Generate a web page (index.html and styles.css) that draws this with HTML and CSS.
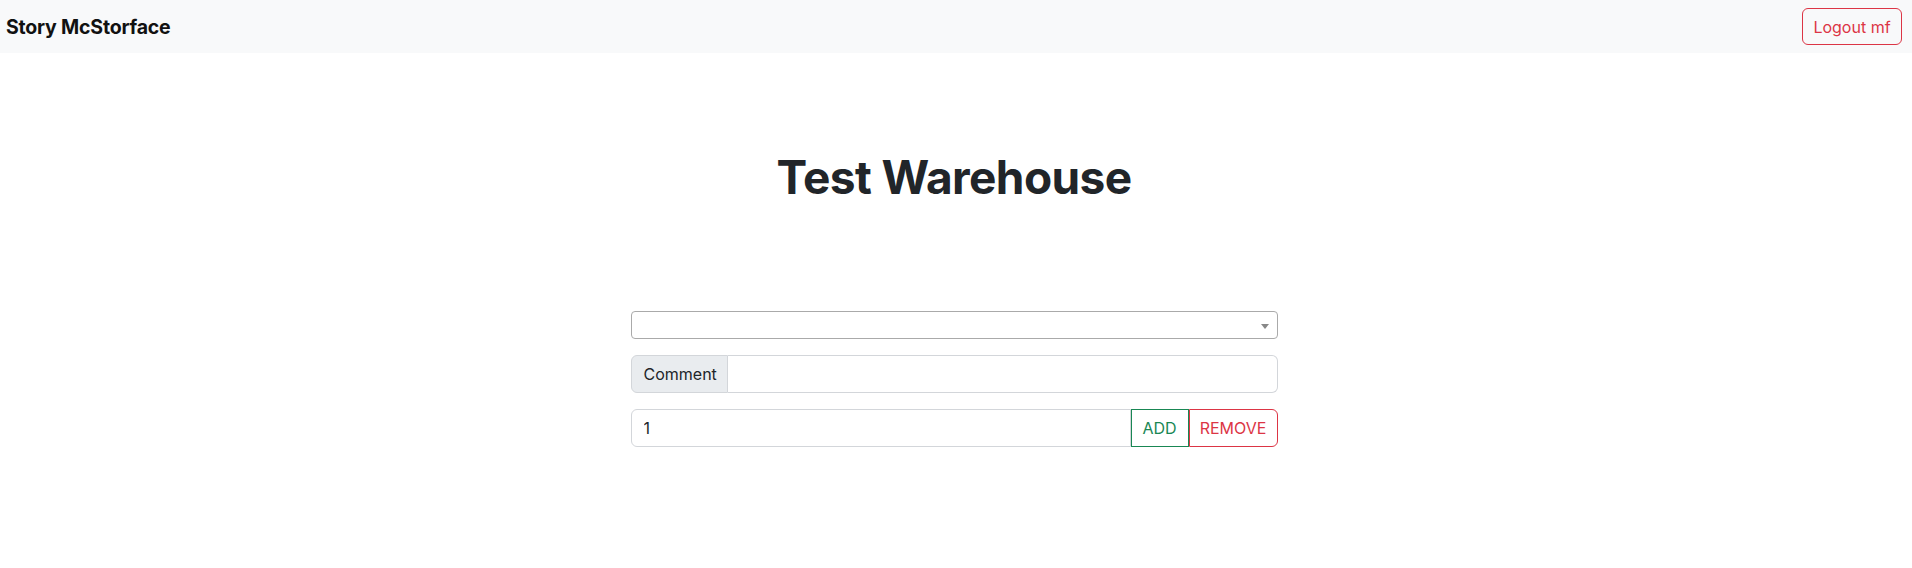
FILE: index.html
```html
<!DOCTYPE html>
<html lang="en">
<head>
<meta charset="utf-8">
<title>Test Warehouse</title>
<link rel="stylesheet" href="styles.css">
</head>
<body>
<nav class="navbar">
  <span class="brand">Story McStorface</span>
  <button class="btn btn-outline-danger logout">Logout mf</button>
</nav>
<main class="main">
  <h1 class="title">Test Warehouse</h1>
  <form class="stock-form">
    <div class="select2">
      <span class="select2-rendered"></span>
      <span class="select2-arrow"></span>
    </div>
    <div class="input-group">
      <span class="input-group-text">Comment</span>
      <input class="form-control" type="text" value="">
    </div>
    <div class="input-group">
      <input class="form-control" type="text" value="1">
      <button type="button" class="btn btn-outline-success grp-btn">ADD</button>
      <button type="button" class="btn btn-outline-danger grp-btn last">REMOVE</button>
    </div>
  </form>
</main>
</body>
</html>
```
FILE: styles.css
```css
* { box-sizing: border-box; }
body {
  margin: 0;
  font-family: Inter, "Noto Sans", "Liberation Sans", sans-serif;
  color: #212529;
  background: #fff;
}
.navbar {
  height: 53px;
  background: #f8f9fa;
  display: flex;
  align-items: center;
  justify-content: space-between;
  padding: 0 10px 0 6px;
}
.brand {
  font-size: 19.5px;
  font-weight: 700;
  color: #111;
  letter-spacing: -0.2px;
}
.btn {
  font-family: inherit;
  font-size: 16px;
  line-height: 24px;
  padding: 6px 12px;
  background: #fff;
  border: 1px solid;
  border-radius: 6px;
  cursor: pointer;
}
.btn-outline-danger { color: #dc3545; border-color: #dc3545; background: transparent; }
.btn-outline-success { color: #198754; border-color: #198754; background: transparent; }
.logout {
  width: 100px;
  height: 37px;
  padding: 0;
}
.main {
  padding-top: 97px;
  display: flex;
  flex-direction: column;
  align-items: center;
}
.title {
  margin: 0;
  font-size: 46px;
  line-height: 1.2;
  font-weight: 700;
  color: #212529;
  letter-spacing: -0.6px;
  transform: translateX(-2px);
}
.stock-form {
  margin-top: 106px;
  width: 647px;
  transform: translateX(-2px);
  display: flex;
  flex-direction: column;
  gap: 16px;
}
.select2 {
  height: 28px;
  border: 1px solid #aaa;
  border-radius: 4px;
  background: #fff;
  display: flex;
  align-items: center;
  justify-content: space-between;
  padding: 0 8px 0 8px;
}
.select2-arrow {
  width: 0;
  height: 0;
  border-style: solid;
  border-width: 5px 4px 0 4px;
  border-color: #888 transparent transparent transparent;
  margin-top: 2px;
}
.input-group {
  display: flex;
  height: 38px;
}
.input-group-text {
  width: 97px;
  flex: none;
  display: flex;
  align-items: center;
  padding: 6px 12px;
  font-size: 16px;
  line-height: 24px;
  background: #e9ecef;
  border: 1px solid #d3d6da;
  border-radius: 6px 0 0 6px;
  color: #212529;
}
.form-control {
  flex: 1;
  min-width: 0;
  font-family: inherit;
  font-size: 16px;
  line-height: 24px;
  padding: 6px 12px;
  border: 1px solid #d3d6da;
  border-radius: 6px;
  color: #212529;
  background: #fff;
  outline: none;
}
.input-group-text + .form-control {
  border-left: 0;
  border-radius: 0 6px 6px 0;
}
.input-group .form-control:first-child {
  border-radius: 6px 0 0 6px;
}
.grp-btn {
  border-radius: 0;
  padding: 0;
  flex: none;
}
.grp-btn.btn-outline-success { width: 58px; }
.grp-btn.last {
  width: 89px;
  border-radius: 0 6px 6px 0;
}
```
